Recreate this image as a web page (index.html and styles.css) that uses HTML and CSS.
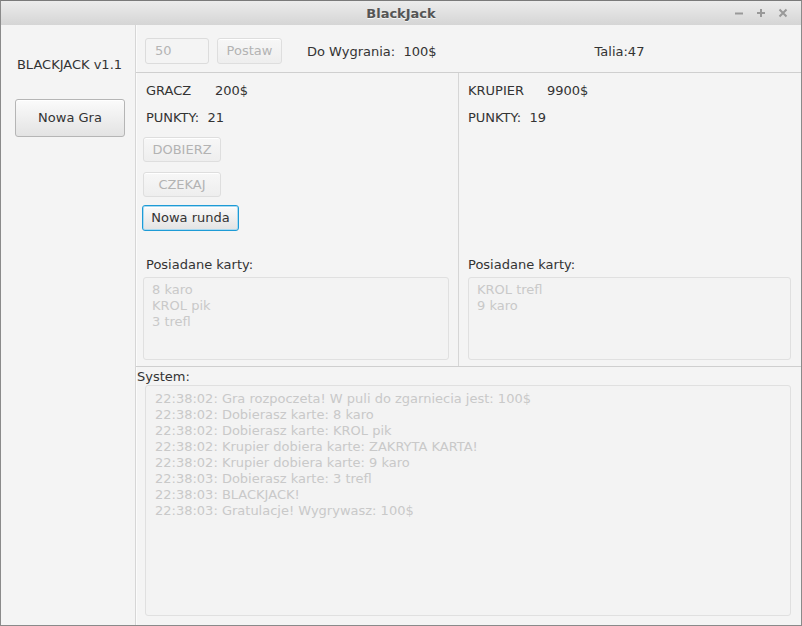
FILE: index.html
```html
<!DOCTYPE html>
<html lang="pl">
<head>
<meta charset="utf-8">
<title>BlackJack</title>
<link rel="stylesheet" href="styles.css">
</head>
<body>
<div class="window">
  <div class="titlebar">
    <span class="title">BlackJack</span>
    <div class="controls">
      <svg width="10" height="10" viewBox="0 0 10 10"><path d="M1 5.5h8" stroke="#999" stroke-width="2"/></svg>
      <svg width="10" height="10" viewBox="0 0 10 10"><path d="M1 5h8M5 1v8" stroke="#999" stroke-width="2"/></svg>
      <svg width="10" height="10" viewBox="0 0 10 10"><path d="M1.5 1.5l7 7M8.5 1.5l-7 7" stroke="#999" stroke-width="2"/></svg>
    </div>
  </div>
  <div class="main">
    <aside class="sidebar">
      <div class="brand">BLACKJACK v1.1</div>
      <button class="btn big">Nowa Gra</button>
    </aside>
    <section class="content">
      <div class="topbar">
        <div class="field">50</div>
        <button class="btn disabled postaw">Postaw</button>
        <span class="win">Do Wygrania:&nbsp; 100$</span>
        <span class="deck">Talia:47</span>
      </div>
      <div class="panels">
        <div class="panel player">
          <div class="row"><span class="name">GRACZ</span><span>200$</span></div>
          <div class="row pts">PUNKTY:&nbsp; 21</div>
          <button class="btn disabled act first">DOBIERZ</button>
          <button class="btn disabled act">CZEKAJ</button>
          <button class="btn focus round">Nowa runda</button>
          <div class="cards-label">Posiadane karty:</div>
          <div class="area cards">8 karo<br>KROL pik<br>3 trefl</div>
        </div>
        <div class="panel dealer">
          <div class="row"><span class="name dname">KRUPIER</span><span>9900$</span></div>
          <div class="row pts">PUNKTY:&nbsp; 19</div>
          <div class="spacer"></div>
          <div class="cards-label">Posiadane karty:</div>
          <div class="area cards">KROL trefl<br>9 karo</div>
        </div>
      </div>
      <div class="system">
        <div class="sys-label">System:</div>
        <div class="area log">22:38:02: Gra rozpoczeta! W puli do zgarniecia jest: 100$<br>22:38:02: Dobierasz karte: 8 karo<br>22:38:02: Dobierasz karte: KROL pik<br>22:38:02: Krupier dobiera karte: ZAKRYTA KARTA!<br>22:38:02: Krupier dobiera karte: 9 karo<br>22:38:03: Dobierasz karte: 3 trefl<br>22:38:03: BLACKJACK!<br>22:38:03: Gratulacje! Wygrywasz: 100$</div>
      </div>
    </section>
  </div>
</div>
</body>
</html>
```
FILE: styles.css
```css
* { box-sizing: border-box; }
html, body { margin: 0; padding: 0; }
body {
  width: 802px;
  height: 626px;
  overflow: hidden;
  font-family: "DejaVu Sans", sans-serif;
  font-size: 13px;
  color: #333;
  background: #f4f4f4;
}
.window {
  width: 802px;
  height: 626px;
  display: flex;
  flex-direction: column;
  border: 1px solid #8a8a8a;
  border-top-color: #7a7a7a;
}
.titlebar {
  height: 24px;
  flex: none;
  background: linear-gradient(#ececec, #d5d5d5);
  display: flex;
  align-items: center;
  justify-content: center;
  position: relative;
}
.title {
  font-weight: bold;
  font-size: 13px;
  color: #555;
  text-shadow: 0 1px 0 #f4f4f4;
}
.controls {
  position: absolute;
  right: 13px;
  top: 7px;
  display: flex;
  gap: 12px;
}
.controls svg { display: block; }
.main {
  flex: 1;
  display: flex;
  min-height: 0;
  background: #f4f4f4;
}
.sidebar {
  width: 135px;
  flex: none;
  border-right: 1px solid #d6d6d6;
  box-shadow: 1px 0 0 #fbfbfb;
  display: flex;
  flex-direction: column;
  align-items: center;
  padding-top: 32px;
}
.brand { line-height: 16px; margin-left: 3px; }
.btn {
  font-family: "DejaVu Sans", sans-serif;
  font-size: 13px;
  color: #333;
  background: linear-gradient(#fbfbfb, #e3e3e3);
  border: 1px solid #b5b5b5;
  border-radius: 3px;
  padding: 0;
  line-height: 16px;
  box-shadow: inset 0 1px 0 #ffffff;
}
.btn.big {
  width: 110px;
  height: 38px;
  margin-top: 26px;
  margin-left: 4px;
}
.btn.disabled {
  color: #b3b3b3;
  border-color: #dedede;
  background: linear-gradient(#f7f7f7, #eeeeee);
}
.btn.focus {
  border: 1px solid #1d9bd6;
  box-shadow: 0 0 0 1px #a9d9f0 inset, inset 0 2px 0 #fff;
}
.content {
  flex: 1;
  display: flex;
  flex-direction: column;
  min-width: 0;
}
.topbar {
  height: 48px;
  flex: none;
  border-bottom: 1px solid #cfcfcf;
  display: flex;
  align-items: center;
  padding-left: 9px;
  padding-top: 5px;
}
.field {
  width: 64px;
  height: 26px;
  border: 1px solid #dcdcdc;
  border-radius: 3px;
  background: #f4f4f4;
  color: #b5b5b5;
  padding-left: 9px;
  line-height: 24px;
}
.postaw {
  width: 65px;
  height: 26px;
  margin-left: 8px;
}
.win { margin-left: 25px; }
.deck { margin-left: 158px; }
.panels {
  height: 294px;
  flex: none;
  display: flex;
  border-bottom: 1px solid #cfcfcf;
}
.panel {
  display: flex;
  flex-direction: column;
  align-items: flex-start;
  padding-top: 10px;
}
.player {
  width: 323px;
  border-right: 1px solid #d6d6d6;
  padding-left: 6px;
}
.dealer {
  flex: 1;
  padding-left: 9px;
}
.row {
  display: flex;
  line-height: 16px;
  height: 16px;
  padding-left: 4px;
}
.dealer .row { padding-left: 0; }
.name { width: 69px; }
.dname { width: 79px; }
.pts { margin-top: 11px; }
.act {
  width: 78px;
  height: 25px;
  margin-left: 1px;
  margin-top: 10px;
}
.act.first { margin-top: 11px; }
.round {
  width: 97px;
  height: 26px;
  margin-top: 8px;
}
.spacer { height: 105px; }
.cards-label {
  line-height: 16px;
  margin-top: 26px;
  padding-left: 4px;
}
.dealer .cards-label { padding-left: 0; }
.area {
  border: 1px solid #e0e0e0;
  border-radius: 3px;
  background: #f3f3f3;
  color: #c9c9c9;
  line-height: 16px;
}
.cards {
  width: 306px;
  height: 83px;
  margin-top: 4px;
  padding: 4px 8px;
  margin-left: 1px;
}
.dealer .cards { width: 323px; margin-left: 0; }
.system {
  flex: 1;
  display: flex;
  flex-direction: column;
  padding-left: 1px;
}
.sys-label { line-height: 16px; margin-top: 2px; }
.log {
  width: 646px;
  height: 231px;
  margin-left: 8px;
  margin-top: 0;
  padding: 5px 9px 4px;
}
```
